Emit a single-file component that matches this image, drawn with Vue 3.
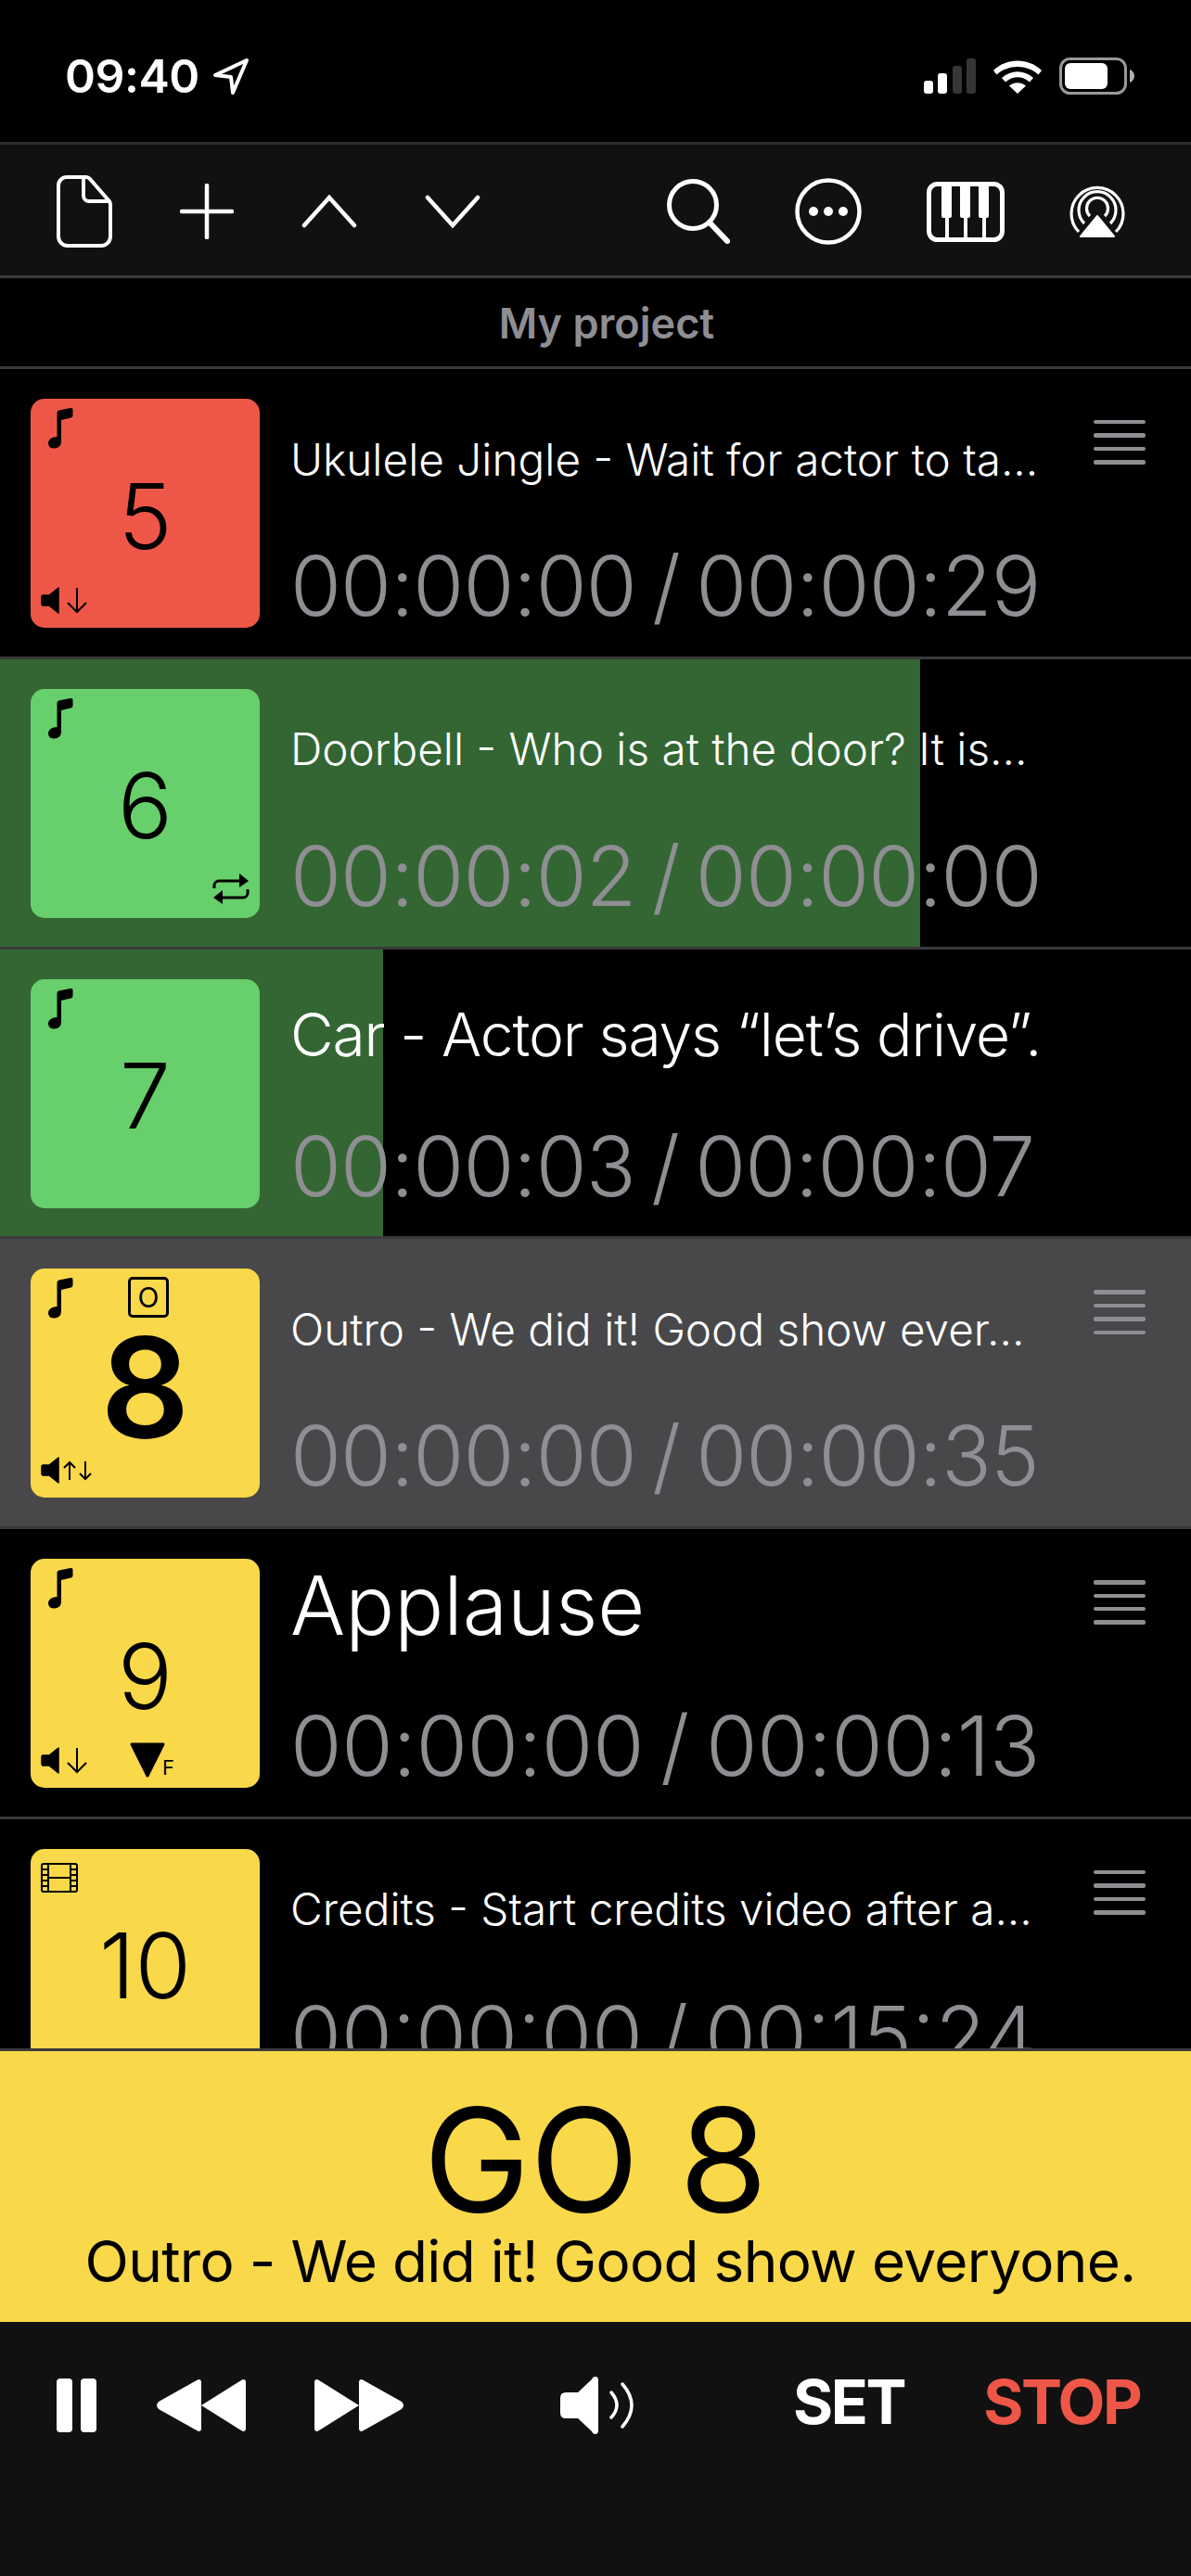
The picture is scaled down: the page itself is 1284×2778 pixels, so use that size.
<template>
  <div class="screen">
    <div class="status">
      <div class="clock">
        <span>09:40</span>
        <svg width="40" height="40" viewBox="0 0 40 40"><path d="M37 3 3 19l17 2 2 17z" fill="none" stroke="#fff" stroke-width="4" stroke-linejoin="round"/></svg>
      </div>
      <div class="status-right">
        <svg width="56" height="38" viewBox="0 0 56 38">
          <rect x="0" y="24" width="10" height="14" rx="3" fill="#fff"/>
          <rect x="15" y="16" width="10" height="22" rx="3" fill="#fff"/>
          <rect x="31" y="8" width="10" height="30" rx="3" fill="#363638"/>
          <rect x="46" y="0" width="10" height="38" rx="3" fill="#363638"/>
        </svg>
        <svg width="54" height="38" viewBox="0 0 54 38">
          <path d="M1 13l3.500 4.500C17 6 37 6 49.500 17.500L53 13C39-1 15-1 1 13zM10 21l4 4.500c8-7 18-7 26 0l4-4.500c-10-9-24-9-34 0zM18 29.500l9 8.500 9-8.500c-5-4.500-13-4.500-18 0z" fill="#fff"/>
        </svg>
        <svg width="82" height="40" viewBox="0 0 82 40">
          <rect x="1.500" y="1.500" width="70" height="37" rx="10" fill="none" stroke="#98989a" stroke-width="3"/>
          <rect x="6" y="6" width="46" height="28" rx="6" fill="#fff"/>
          <path d="M76 13c3 1 5 4 5 7s-2 6-5 7z" fill="#b0b0b2"/>
        </svg>
      </div>
    </div>

    <div class="toolbar">
      <div class="tool-group">
        <svg width="60" height="78" viewBox="0 0 60 78"><path d="M11 2h21c2 0 3 1 4 2l20 23c1 1 2 2 2 4v35a10 10 0 0 1-10 10H12A10 10 0 0 1 2 66V11a9 9 0 0 1 9-9zM29 3v19a6 6 0 0 0 6 6h22" fill="none" stroke="#fff" stroke-width="4" stroke-linejoin="round"/></svg>
        <svg width="58" height="60" viewBox="0 0 58 60"><path d="M29 2v56M2 30h54" stroke="#fff" stroke-width="4.500" stroke-linecap="round"/></svg>
        <svg width="60" height="36" viewBox="0 0 60 36"><path d="M3 33 30 3l27 30" fill="none" stroke="#fff" stroke-width="4.500" stroke-linecap="round"/></svg>
        <svg width="60" height="36" viewBox="0 0 60 36"><path d="M3 3l27 30L57 3" fill="none" stroke="#fff" stroke-width="4.500" stroke-linecap="round"/></svg>
      </div>
      <div class="tool-group right">
        <svg width="68" height="70" viewBox="0 0 68 70"><circle cx="28" cy="28" r="25.500" fill="none" stroke="#fff" stroke-width="5"/><path d="m46 47 19 20" stroke="#fff" stroke-width="6" stroke-linecap="round"/></svg>
        <svg width="72" height="72" viewBox="0 0 72 72"><circle cx="36" cy="36" r="33.500" fill="none" stroke="#fff" stroke-width="4.500"/><circle cx="20" cy="36" r="5" fill="#fff"/><circle cx="36" cy="36" r="5" fill="#fff"/><circle cx="52" cy="36" r="5" fill="#fff"/></svg>
        <svg width="84" height="65" viewBox="0 0 84 65">
          <rect x="2.500" y="2.500" width="79" height="60" rx="9" fill="none" stroke="#fff" stroke-width="5"/>
          <path d="M16 3h11v34q0 2-2 2h-1v24h-4V39h-2q-2 0-2-2zM36 3h11v34q0 2-2 2h-1v24h-4V39h-2q-2 0-2-2zM56 3h11v34q0 2-2 2h-1v24h-4V39h-2q-2 0-2-2z" fill="#fff"/>
        </svg>
        <svg width="60" height="60" viewBox="0 0 60 60">
          <path d="M10 52A28 28 0 1 1 50 52M16 43A20 20 0 1 1 44 43M22 35A11.500 11.500 0 1 1 38 35" fill="none" stroke="#fff" stroke-width="3.200"/>
          <path d="M30 35 12 57h36z" fill="#fff" stroke="#fff" stroke-width="2" stroke-linejoin="round"/>
        </svg>
      </div>
    </div>

    <div class="project">My project</div>

    <div class="list">
      <div v-for="cue in cues" :key="cue.num" class="row" :class="{ current: cue.current }">
        <div v-if="cue.progress" class="progress" :style="{ width: cue.progress + 'px' }"></div>
        <div class="tile" :style="{ background: cue.color }">
          <svg v-if="!cue.video" class="note" width="27" height="44" viewBox="0 0 27 44"><path d="M9.500 5q0-2 2-2.500L24 0q2.500-.5 2.500 2v6q0 2-2 2.500L14 13v23q0 7-7 7.500Q0 43.500 0 38q0-5 6-6.500l3.500-.5z" fill="#000"/></svg>
          <svg v-else class="film" width="40" height="32" viewBox="0 0 40 32">
            <rect x="1" y="1" width="38" height="30" rx="2" fill="none" stroke="#000" stroke-width="2"/>
            <path d="M8 1v30M32 1v30M8 16h24M1 7h7M1 13h7M1 19h7M1 25h7M32 7h7M32 13h7M32 19h7M32 25h7" stroke="#000" stroke-width="2"/>
          </svg>
          <div v-if="cue.target" class="target">O</div>
          <span class="num" :class="{ big: cue.current }">{{ cue.num }}</span>
          <div v-if="cue.fade" class="fade" :class="cue.fade">
            <svg width="20" height="29" viewBox="0 0 20 29"><path d="M19 1v27L9 20H2a2 2 0 0 1-1-2v-7a2 2 0 0 1 1-2h7z" fill="#000" stroke="#000" stroke-width="1.500" stroke-linejoin="round"/></svg>
            <template v-if="cue.fade === 'both'">
              <svg width="14" height="22" viewBox="0 0 14 22"><path d="M7 21V2M1 8l6-6 6 6" fill="none" stroke="#000" stroke-width="2"/></svg>
              <svg width="14" height="22" viewBox="0 0 14 22"><path d="M7 1v19M1 14l6 6 6-6" fill="none" stroke="#000" stroke-width="2"/></svg>
            </template>
            <svg v-else width="24" height="29" viewBox="0 0 24 29"><path d="M12 1v26M2 17l10 10 10-10" fill="none" stroke="#000" stroke-width="2"/></svg>
          </div>
          <svg v-if="cue.loop" class="loop" width="40" height="33" viewBox="0 0 40 33">
            <path d="M2 16v-3a5 5 0 0 1 5-5h24M38 17v4a5 5 0 0 1-5 5H9" fill="none" stroke="#000" stroke-width="3"/>
            <path d="m29 0 10 8-10 7zM11 18 1 26l10 7z" fill="#000"/>
          </svg>
          <div v-if="cue.flag" class="flag">
            <svg width="40" height="40" viewBox="0 0 40 40"><path d="M3 3h34L20 37z" fill="#000" stroke="#000" stroke-width="3" stroke-linejoin="round"/></svg>
            <span>F</span>
          </div>
        </div>
        <div class="info">
          <div class="title" :class="cue.size">{{ cue.title }}</div>
          <div class="time" :style="{ fontSize: cue.timeSize + 'px', letterSpacing: cue.track + 'px' }">{{ cue.time }}</div>
        </div>
        <div v-if="cue.handle" class="handle"><i></i><i></i><i></i><i></i></div>
      </div>
    </div>

    <div class="go">
      <div class="go-label">GO 8</div>
      <div class="go-title">Outro - We did it! Good show everyone.</div>
    </div>

    <div class="controls">
      <svg width="43" height="58" viewBox="0 0 43 58"><rect x="0" y="0" width="17" height="58" rx="4" fill="#fff"/><rect x="26" y="0" width="17" height="58" rx="4" fill="#fff"/></svg>
      <svg class="c-back" width="98" height="58" viewBox="0 0 98 58"><path d="M49 4v50q0 3-3 3l-2-1L3 33q-4-4 0-8L44 2l2-1q3 0 3 3zM97 4v50q0 3-3 3l-2-1-43-27L92 2l2-1q3 0 3 3z" fill="#fff"/></svg>
      <svg class="c-fwd" width="98" height="58" viewBox="0 0 98 58"><path d="M1 4v50q0 3 3 3l2-1 43-27L6 2 4 1Q1 1 1 4zM49 4v50q0 3 3 3l2-1 41-23q4-4 0-8L54 2l-2-1q-3 0-3 3z" fill="#fff"/></svg>
      <svg class="c-vol" width="80" height="62" viewBox="0 0 80 62">
        <path d="M42 4v54q0 4-3 4t-4-3L20 45H7q-6 0-6-6V23q0-6 6-6h13L35 3q1-3 4-3t3 4z" fill="#fff"/>
        <path d="M56 17q12 14 0 27M68 8q20 23 0 46" fill="none" stroke="#fff" stroke-width="3.500" stroke-linecap="round"/>
      </svg>
      <div class="set">SET</div>
      <div class="stop">STOP</div>
    </div>
  </div>
</template>

<script setup>
const RED = '#ee5747'
const GREEN = '#67cf6b'
const YELLOW = '#f9d84a'

const cues = [
  { num: 5, color: RED, fade: 'down', handle: true, size: 's', timeSize: 89, track: -0.9, title: 'Ukulele Jingle - Wait for actor to ta...', time: '00:00:00 / 00:00:29' },
  { num: 6, color: GREEN, loop: true, progress: 992, size: 's', timeSize: 89, track: -0.9, title: 'Doorbell - Who is at the door? It is...', time: '00:00:02 / 00:00:00' },
  { num: 7, color: GREEN, progress: 413, size: 'm', timeSize: 89, track: -0.9, title: 'Car - Actor says “let’s drive”.', time: '00:00:03 / 00:00:07' },
  { num: 8, color: YELLOW, current: true, target: true, fade: 'both', handle: true, size: 's', timeSize: 89, track: -0.9, title: 'Outro - We did it! Good show ever...', time: '00:00:00 / 00:00:35' },
  { num: 9, color: YELLOW, fade: 'down', flag: true, handle: true, size: 'l', timeSize: 90, track: -0.4, title: 'Applause', time: '00:00:00 / 00:00:13' },
  { num: 10, color: YELLOW, video: true, handle: true, size: 's', timeSize: 89, track: 0, title: 'Credits - Start credits video after a...', time: '00:00:00 / 00:15:24' }
]
</script>

<style>
html, body { background: #000; }
</style>

<style scoped>
.screen {
  width: 1284px;
  height: 2778px;
  display: flex;
  flex-direction: column;
  background: #000;
  color: #fff;
  font-family: Inter, "Liberation Sans", sans-serif;
  overflow: hidden;
}

.status {
  height: 153px;
  flex: none;
  box-sizing: border-box;
  display: flex;
  align-items: center;
  justify-content: space-between;
  padding: 10px 60px 0 70px;
}
.clock {
  display: flex;
  align-items: center;
  gap: 14px;
  font-size: 50px;
  font-weight: 600;
  letter-spacing: -0.5px;
}
.status-right { display: flex; align-items: center; gap: 18px; }

.toolbar {
  height: 147px;
  flex: none;
  box-sizing: border-box;
  background: #111;
  border-top: 3px solid #2c2c2e;
  border-bottom: 3px solid #3a3a3c;
  display: flex;
  align-items: center;
  justify-content: space-between;
  padding: 3px 71px 0 61px;
}
.tool-group { display: flex; align-items: center; gap: 73px; }
.tool-group.right { gap: 70px; }

.project {
  height: 98px;
  flex: none;
  box-sizing: border-box;
  border-bottom: 3px solid #3a3a3c;
  display: flex;
  align-items: center;
  justify-content: center;
  color: #8e8e93;
  font-size: 45px;
  font-weight: 600;
  padding: 2px 0 0 24px;
}

.list { height: 1811px; flex: none; overflow: hidden; }
.row {
  position: relative;
  height: 312.8px;
  box-sizing: border-box;
  border-bottom: 3px solid #3a3a3c;
  display: flex;
  padding: 32px 0 0 33px;
}
.row.current { background: #48484a; }
.progress {
  position: absolute;
  left: 0;
  top: 0;
  bottom: 0;
  background: #336633;
}
.tile {
  position: relative;
  width: 247px;
  height: 247px;
  flex: none;
  border-radius: 15px;
  display: flex;
  align-items: center;
  justify-content: center;
  color: #000;
}
.note { position: absolute; left: 19px; top: 10px; }
.film { position: absolute; left: 11px; top: 15px; }
.target {
  position: absolute;
  left: 105px;
  top: 9px;
  width: 44px;
  height: 44px;
  box-sizing: border-box;
  border: 3px solid #000;
  border-radius: 5px;
  display: flex;
  align-items: center;
  justify-content: center;
  font-size: 30px;
}
.num { font-size: 98px; font-weight: 350; margin-top: 5px; }
.num.big { font-size: 150px; font-weight: 600; line-height: 0.8; margin-top: 11px; }
.fade {
  position: absolute;
  left: 11px;
  bottom: 15px;
  display: flex;
  align-items: center;
  gap: 7px;
}
.fade.both { gap: 4px; }
.fade.both svg:last-child { margin-left: -1px; }
.loop { position: absolute; right: 11px; bottom: 15px; }
.flag {
  position: absolute;
  left: 106px;
  bottom: 10px;
  display: flex;
  align-items: flex-end;
}
.flag span { font-size: 22px; line-height: 22px; margin-left: -4px; margin-bottom: 1px; }

.info {
  position: relative;
  margin-left: 33px;
  width: 830px;
  flex: none;
  height: 247px;
  display: flex;
  flex-direction: column;
}
.title {
  flex: 1;
  display: flex;
  align-items: center;
  white-space: nowrap;
  font-weight: 300;
  font-size: 47.7px;
  padding-bottom: 21px;
  min-height: 0;
}
.title.m { font-size: 64px; letter-spacing: -1.1px; padding-bottom: 33px; }
.title.l { font-size: 88px; padding-bottom: 53px; }
.time {
  color: #8e8e93;
  font-weight: 280;
  line-height: 100px;
  margin-bottom: -5px;
  word-spacing: -7px;
  white-space: nowrap;
}
.handle {
  position: absolute;
  left: 1179px;
  top: 55px;
  width: 56px;
  display: flex;
  flex-direction: column;
  gap: 10px;
}
.handle i { display: block; height: 4.4px; border-radius: 2px; background: #8e8e93; }

.go {
  height: 295px;
  flex: none;
  box-sizing: border-box;
  border-top: 3px solid #3a3a3c;
  background: #f9d84a;
  color: #000;
  display: flex;
  flex-direction: column;
  align-items: center;
}
.go-label { font-size: 154px; line-height: 150px; margin-top: 42px; font-weight: 400; }
.go-title { font-size: 62px; line-height: 70px; margin-left: 32px; letter-spacing: -0.65px; white-space: nowrap; }

.controls {
  flex: 1;
  background: #111;
  display: flex;
  align-items: flex-start;
  padding: 61px 0 0 61px;
}
.c-back { margin-left: 64px; }
.c-fwd { margin-left: 72px; }
.c-vol { margin-left: 167px; margin-top: -2px; }
.set, .stop { font-size: 66px; font-weight: 700; line-height: 58px; letter-spacing: -2.4px; margin-top: -4px; }
.set { margin-left: 172px; }
.stop { color: #ee5747; margin-left: 85px; }
</style>
